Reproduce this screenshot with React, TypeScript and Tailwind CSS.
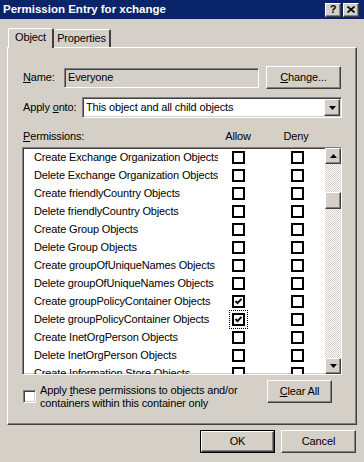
import React from "react";

// classic 3D borders
const raised =
  "bg-[#d4d0c8] border border-t-white border-l-white border-r-[#404040] border-b-[#404040] shadow-[inset_-1px_-1px_0_#808080]";
const sunken =
  "border border-t-[#808080] border-l-[#808080] border-r-white border-b-white shadow-[inset_1px_1px_0_#404040,inset_-1px_-1px_0_#d4d0c8]";

const rows: [string, boolean][] = [
  ["Create Exchange Organization Objects", false],
  ["Delete Exchange Organization Objects", false],
  ["Create friendlyCountry Objects", false],
  ["Delete friendlyCountry Objects", false],
  ["Create Group Objects", false],
  ["Delete Group Objects", false],
  ["Create groupOfUniqueNames Objects", false],
  ["Delete groupOfUniqueNames Objects", false],
  ["Create groupPolicyContainer Objects", true],
  ["Delete groupPolicyContainer Objects", true],
  ["Create InetOrgPerson Objects", false],
  ["Delete InetOrgPerson Objects", false],
  ["Create Information Store Objects", false],
];

function Check({ checked, focused }: { checked?: boolean; focused?: boolean }) {
  return (
    <div
      className={
        "w-[13px] h-[13px] border-2 border-black bg-white flex items-center justify-center " +
        (focused ? "outline outline-1 outline-dotted outline-black outline-offset-[2px]" : "")
      }
    >
      {checked && (
        <svg width="9" height="9" viewBox="0 0 9 9">
          <polyline points="1.5,4 3.5,6.2 7.5,1.8" fill="none" stroke="black" strokeWidth="1.9" />
        </svg>
      )}
    </div>
  );
}

function Arrow({ up }: { up?: boolean }) {
  return (
    <svg width="7" height="4" viewBox="0 0 7 4">
      <polygon points={up ? "0,4 7,4 3.5,0" : "0,0 7,0 3.5,4"} fill="black" />
    </svg>
  );
}

function Button({ children, wide, def }: { children: React.ReactNode; wide?: string; def?: boolean }) {
  const inner = (
    <div className={raised + " h-full w-full flex items-center justify-center"}>{children}</div>
  );
  return def ? (
    <div className={"border border-black h-[23px] " + (wide || "w-[75px]")}>{inner}</div>
  ) : (
    <div className={"h-[23px] " + (wide || "w-[75px]")}>{inner}</div>
  );
}

export default function App() {
  return (
    <div className="w-[364px] h-[462px] bg-[#d4d0c8] flex flex-col font-['Liberation_Sans',Arial,sans-serif] text-[11px] tracking-[-0.15px] text-black overflow-hidden">
      {/* title bar */}
      <div className="h-[19px] bg-[#0a246a] flex items-center pl-[3px] pr-[5px]">
        <span className="text-white font-bold text-[11.5px] tracking-normal">Permission Entry for xchange</span>
        <div className="ml-auto flex gap-[2px]">
          <div className={raised + " w-[16px] h-[14px] flex items-center justify-center font-bold text-[11px] leading-none"}>
            ?
          </div>
          <div className={raised + " w-[16px] h-[14px] flex items-center justify-center"}>
            <svg width="8" height="7" viewBox="0 0 8 7">
              <path d="M0.5 0.5 L7.5 6.5 M7.5 0.5 L0.5 6.5" stroke="black" strokeWidth="1.6" />
            </svg>
          </div>
        </div>
      </div>

      {/* tabs */}
      <div className="mt-[9px] h-[19px] flex items-end pl-[8px]">
        <div className="relative z-10 -mb-px h-[20px] w-[46px] bg-[#d4d0c8] border-t border-l border-t-white border-l-white border-r-2 border-r-[#404040] rounded-t-[2px] flex items-center justify-center pb-[2px]">
          Object
        </div>
        <div className="h-[18px] w-[57px] border-t border-t-white border-r-2 border-r-[#404040] rounded-t-[2px] flex items-center justify-center">
          Properties
        </div>
      </div>

      {/* panel */}
      <div className="ml-[7px] w-[350px] h-[378px] border-t border-l border-t-white border-l-white border-r border-b border-r-[#404040] border-b-[#404040] shadow-[inset_-1px_-1px_0_#808080] pl-[14px] pr-[14px] pt-[18px] flex flex-col">
        <div className="flex items-center h-[23px]">
          <div className="w-[42px] pl-[1px]">
            <u>N</u>ame:
          </div>
          <div className={sunken + " w-[195px] h-[20px] flex items-center pl-[3px]"}>Everyone</div>
          <div className="ml-auto mr-[1px]">
            <Button>
              <u>C</u>hange...
            </Button>
          </div>
        </div>

        <div className="flex items-center h-[21px] mt-[8px]">
          <div className="w-[60px] pl-[1px]">
            Apply <u>o</u>nto:
          </div>
          <div className={sunken + " flex-1 h-[21px] bg-white flex items-center pl-[3px]"}>
            <span>This object and all child objects</span>
            <div className={raised + " ml-auto mr-[1px] w-[16px] h-[17px] flex items-center justify-center"}>
              <Arrow />
            </div>
          </div>
        </div>

        <div className="flex items-center h-[14px] mt-[11px]">
          <div className="w-[196px] pl-[1px]">
            <u>P</u>ermissions:
          </div>
          <div className="w-[40px] text-center">Allow</div>
          <div className="w-[18px]" />
          <div className="w-[40px] text-center">Deny</div>
        </div>

        <div className={sunken + " mt-[4px] h-[228px] bg-white flex"}>
          <div className="flex-1 overflow-hidden flex flex-col">
            {rows.map(([label, allow], i) => (
              <div key={i} className="h-[18px] shrink-0 flex items-center">
                <div className="w-[195px] pl-[11px] whitespace-nowrap overflow-hidden">{label}</div>
                <div className="w-[40px] flex justify-center">
                  <Check checked={allow} focused={i === 9} />
                </div>
                <div className="w-[19px]" />
                <div className="w-[40px] flex justify-center">
                  <Check />
                </div>
              </div>
            ))}
          </div>
          <div className="w-[16px] flex flex-col bg-[repeating-conic-gradient(#d4d0c8_0_25%,#ffffff_0_50%)] bg-[length:2px_2px]">
            <div className={raised + " h-[16px] flex items-center justify-center"}>
              <Arrow up />
            </div>
            <div className="h-[28px]" />
            <div className={raised + " h-[17px]"} />
            <div className="flex-1" />
            <div className={raised + " h-[16px] flex items-center justify-center"}>
              <Arrow />
            </div>
          </div>
        </div>

        <div className="flex items-start mt-[5px]">
          <div className={sunken + " mt-[10px] ml-[1px] w-[13px] h-[13px] bg-white"} />
          <div className="ml-[4px] mt-[4px] leading-[13px]">
            Apply <u>t</u>hese permissions to objects and/or
            <br />
            containers within this container only
          </div>
          <div className="ml-auto mr-[10px]">
            <Button wide="w-[65px]">
              <u>C</u>lear All
            </Button>
          </div>
        </div>
      </div>

      <div className="flex justify-end gap-[6px] pr-[8px] mt-[5px]">
        <Button def>OK</Button>
        <Button>Cancel</Button>
      </div>
    </div>
  );
}
